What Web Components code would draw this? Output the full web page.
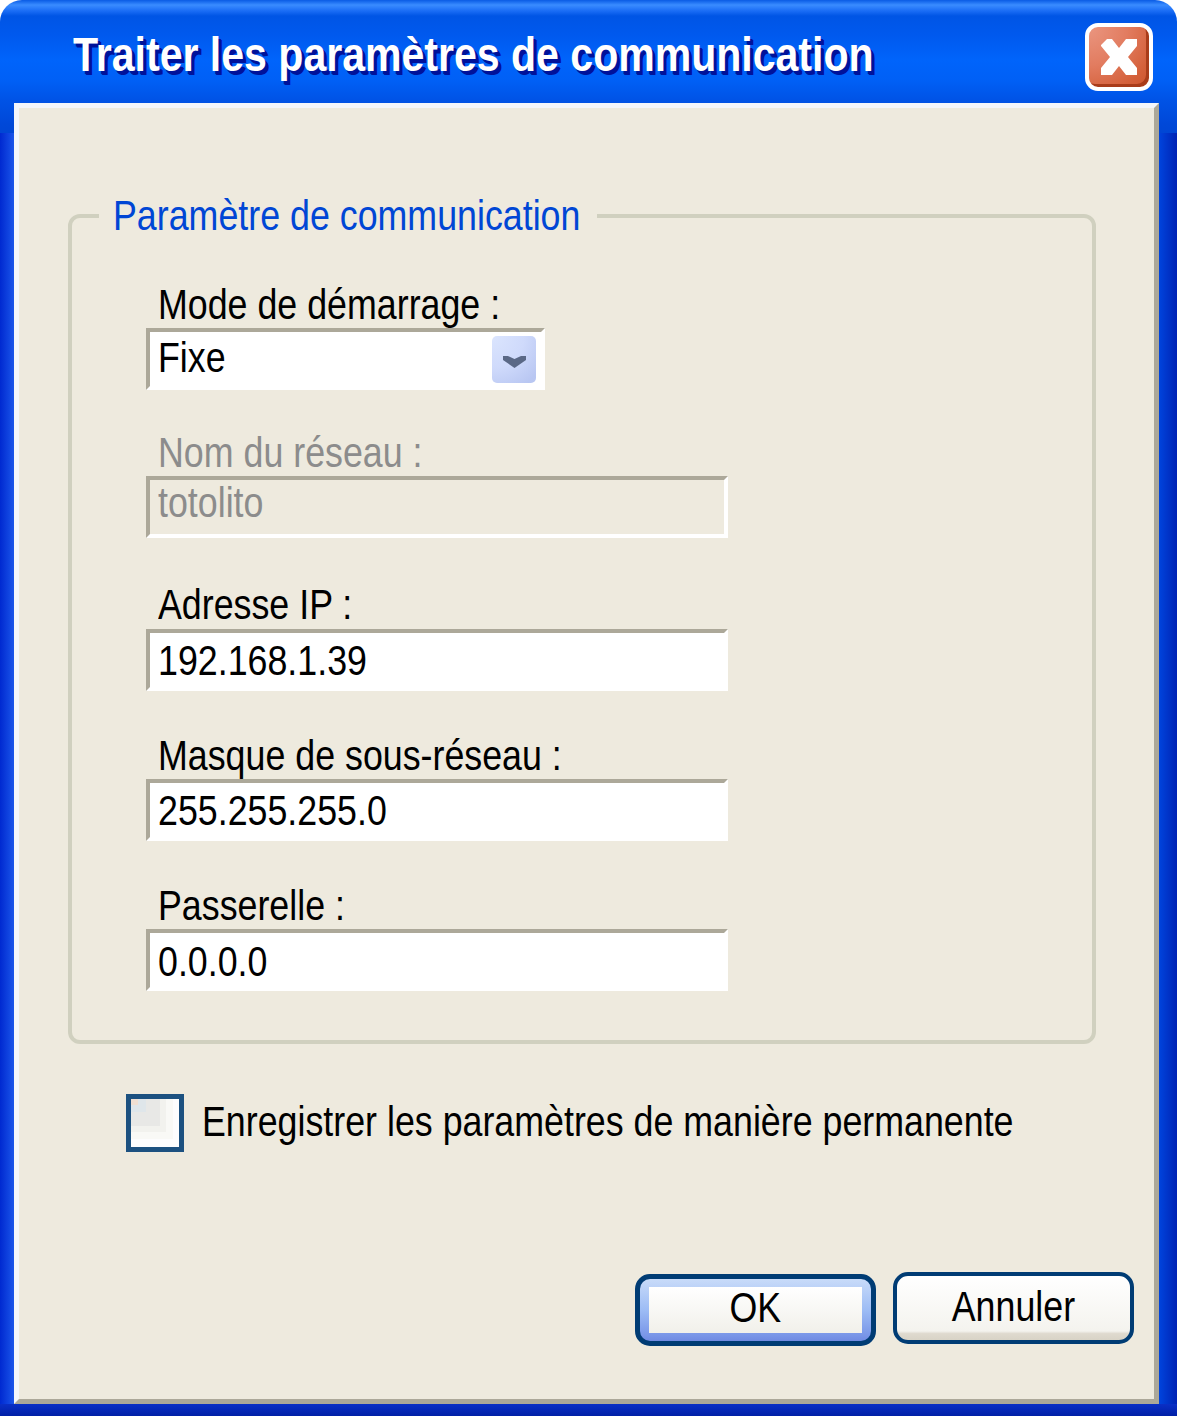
<!DOCTYPE html>
<html lang="fr">
<head>
<meta charset="utf-8">
<title>Traiter les paramètres de communication</title>
<style>
  html, body { margin: 0; padding: 0; background: #fff; }
  body { font: 42px/46px "Liberation Sans", Arial, sans-serif; color: #000; --sx: .852; }
</style>
</head>
<body>
<xp-window>
  <span slot="title">Traiter les paramètres de communication</span>
  <xp-group>
    <span slot="legend">Paramètre de communication</span>
    <xp-combo>Mode de démarrage :<span slot="value">Fixe</span></xp-combo>
    <xp-field disabled style="margin-top:40px;--value-lh:46px">Nom du réseau :<span slot="value">totolito</span></xp-field>
    <xp-field style="margin-top:45px;--label-lh:44px;--value-lh:56px">Adresse IP :<span slot="value">192.168.1.39</span></xp-field>
    <xp-field style="margin-top:42px;--value-lh:56px">Masque de sous-réseau :<span slot="value">255.255.255.0</span></xp-field>
    <xp-field style="margin-top:42px;--value-lh:58px">Passerelle :<span slot="value">0.0.0.0</span></xp-field>
  </xp-group>
  <xp-check>Enregistrer les paramètres de manière permanente</xp-check>
  <xp-actions>
    <xp-button default>OK</xp-button>
    <xp-button>Annuler</xp-button>
  </xp-actions>
</xp-window>

<script>
const textCss = `
  .t { display: inline-block; white-space: nowrap; transform: scaleX(var(--sx)); transform-origin: left center; }
`;

class XpWindow extends HTMLElement {
  constructor() {
    super();
    this.attachShadow({ mode: 'open' });
    this.shadowRoot.innerHTML = `
      <style>
        ${textCss}
        :host {
          display: flex;
          flex-direction: column;
          box-sizing: border-box;
          width: 1177px;
          height: 1416px;
          padding: 0 18px 12px 14px;
          border-radius: 22px 22px 0 0;
          background:
            linear-gradient(#0a2fc6, #0020a6) left bottom / 100% 12px no-repeat,
            linear-gradient(#0a5be4 0, #1c6ff0 2px, #3a8cff 5px, #1a6cf5 11px, #0055e5 16px, #0059ee 35px, #0064fb 60px, #0060f6 80px, #0053e6 100px, #0048d8 124px, #0046d4 133px) left top / 100% 133px no-repeat,
            linear-gradient(90deg, #0029d0, #1a55ea 14px, #0044dd 1159px, #0023b4);
        }
        .bar {
          flex: none;
          display: flex;
          align-items: center;
          justify-content: space-between;
          box-sizing: border-box;
          height: 103px;
          padding: 0 6px 0 59px;
        }
        .title {
          padding-top: 6px;
          font-weight: bold;
          font-size: 48px;
          line-height: 56px;
          color: #fff;
          text-shadow: 3px 3px 0 #00129a, 4px 4px 0 #00129a;
          --sx: .855;
        }
        .close {
          box-sizing: border-box;
          width: 68px;
          height: 68px;
          margin-top: 11px;
          display: flex;
          align-items: center;
          justify-content: center;
          border: 4px solid #fff;
          border-radius: 13px;
          background:
            radial-gradient(circle at 0 0, #ea9680 0, #e27c60 45%, #d4603a 80%, #c64c24 115%);
          box-shadow: inset -3px -3px 0 #a93c1a;
        }
        .close svg { width: 36px; height: 36px; fill: #fff; }
        .panel {
          flex: 1;
          display: flex;
          flex-direction: column;
          box-sizing: border-box;
          border: 5px solid;
          border-color: #f4f6fb #aca899 #aca899 #f4f6fb;
          background: #eeeade;
        }
      </style>
      <div class="bar">
        <div class="title"><span class="t"><slot name="title"></slot></span></div>
        <div class="close">
          <svg viewBox="0 0 36 36"><path d="M0 6 6 0H11L18 9 25 0H36V7L27 18 36 29V36H25L18 27 11 36H0V29L9 18 0 7Z"/></svg>
        </div>
      </div>
      <div class="panel"><slot></slot></div>
    `;
  }
}

class XpGroup extends HTMLElement {
  constructor() {
    super();
    this.attachShadow({ mode: 'open' });
    this.shadowRoot.innerHTML = `
      <style>
        ${textCss}
        :host { display: block; margin: 85px 58px 0 49px; }
        fieldset {
          display: flex;
          flex-direction: column;
          margin: 0;
          min-width: 0;
          padding: 43px 0 49px 74px;
          border: 4px solid #d0d0bf;
          border-radius: 12px;
        }
        legend {
          box-sizing: border-box;
          width: 498px;
          margin-left: -47px;
          padding: 0 14px;
          color: #0046d5;
        }
        .stack { display: flex; flex-direction: column; align-items: flex-start; }
      </style>
      <fieldset>
        <legend><span class="t"><slot name="legend"></slot></span></legend>
        <div class="stack"><slot></slot></div>
      </fieldset>
    `;
  }
}

class XpField extends HTMLElement {
  constructor() {
    super();
    this.attachShadow({ mode: 'open' });
    this.shadowRoot.innerHTML = `
      <style>
        ${textCss}
        :host { display: block; width: 582px; }
        :host([disabled]) { color: #8c8c8c; }
        .label { padding-left: 12px; height: 46px; line-height: var(--label-lh, 46px); }
        .box {
          box-sizing: border-box;
          height: 62px;
          padding-left: 8px;
          border: 4px solid;
          border-color: #aca899 #fff #fff #aca899;
          background: #fff;
          line-height: var(--value-lh, 54px);
        }
        :host([disabled]) .box { background: #eeeade; }
      </style>
      <div class="label"><span class="t"><slot></slot></span></div>
      <div class="box"><span class="t"><slot name="value"></slot></span></div>
    `;
  }
}

class XpCombo extends HTMLElement {
  constructor() {
    super();
    this.attachShadow({ mode: 'open' });
    this.shadowRoot.innerHTML = `
      <style>
        ${textCss}
        :host { display: block; width: 399px; }
        .label { padding-left: 12px; height: 46px; }
        .box {
          display: flex;
          align-items: center;
          justify-content: space-between;
          box-sizing: border-box;
          height: 62px;
          padding: 0 5px 0 8px;
          border: 4px solid;
          border-color: #aca899 #fff #fff #aca899;
          background: #fff;
          line-height: 52px;
        }
        .value { padding-bottom: 2px; }
        .arrow {
          width: 44px;
          height: 47px;
          display: flex;
          align-items: center;
          justify-content: center;
          border-radius: 5px;
          background: radial-gradient(circle at 0 0, #dbe5fe 0, #cfdafb 50%, #b9c7f2 90%, #b3c1ef 130%);
        }
        .arrow svg { width: 23px; height: 13px; fill: #5a6886; margin-top: 5px; }
      </style>
      <div class="label"><span class="t"><slot></slot></span></div>
      <div class="box">
        <span class="t value"><slot name="value"></slot></span>
        <div class="arrow"><svg viewBox="0 0 23 13"><path d="M0 1H5L11.5 4 18 1H23V5L11.5 13 0 5Z"/></svg></div>
      </div>
    `;
  }
}

class XpCheck extends HTMLElement {
  constructor() {
    super();
    this.attachShadow({ mode: 'open' });
    this.shadowRoot.innerHTML = `
      <style>
        ${textCss}
        :host {
          display: flex;
          align-items: center;
          gap: 18px;
          margin: 50px 0 0 107px;
        }
        .t { padding-bottom: 2px; }
        .box {
          flex: none;
          box-sizing: border-box;
          width: 58px;
          height: 58px;
          border: 5px solid #1c5180;
          /* XP checkbox: stepped fade from the top left corner */
          background:
            linear-gradient(#f0dfd2, #f0dfd2) 0 0 / 7px 6px no-repeat,
            linear-gradient(#dfe6ea, #dfe6ea) 0 0 / 15px 13px no-repeat,
            linear-gradient(#e8e8e6, #e8e8e6) 0 0 / 29px 27px no-repeat,
            linear-gradient(#f2f2ee, #f2f2ee) 0 0 / 35px 33px no-repeat,
            linear-gradient(#f9f9f6, #f9f9f6) 0 0 / 42px 40px no-repeat,
            #fdfdfe;
        }
      </style>
      <div class="box"></div>
      <span class="t"><slot></slot></span>
    `;
  }
}

class XpActions extends HTMLElement {
  constructor() {
    super();
    this.attachShadow({ mode: 'open' });
    this.shadowRoot.innerHTML = `
      <style>
        :host {
          display: flex;
          justify-content: flex-end;
          align-items: flex-start;
          gap: 17px;
          margin-top: 120px;
          padding-right: 20px;
        }
      </style>
      <slot></slot>
    `;
  }
}

class XpButton extends HTMLElement {
  constructor() {
    super();
    this.attachShadow({ mode: 'open' });
    this.shadowRoot.innerHTML = `
      <style>
        ${textCss}
        :host {
          display: block;
          box-sizing: border-box;
          width: 241px;
          height: 72px;
          border: 4px solid #003c74;
          border-radius: 15px;
          background: linear-gradient(#fff, #f4f3ee 86%, #dfdacf 90%, #d8d3c6);
          overflow: hidden;
        }
        :host([default]) {
          margin-top: 2px;
          border-width: 5px;
          background: linear-gradient(#c8dbf9, #9dbcf5 50%, #7a97e8 90%, #6f8ae2);
        }
        .face {
          box-sizing: border-box;
          height: 100%;
          padding-bottom: 2px;
          display: flex;
          align-items: center;
          justify-content: center;
        }
        :host([default]) .face {
          height: 46px;
          padding-bottom: 4px;
          margin: 8px 9px;
          background: linear-gradient(#fff, #f1f0ea);
        }
        .t { transform-origin: center; }
      </style>
      <div class="face"><span class="t"><slot></slot></span></div>
    `;
  }
}

customElements.define('xp-window', XpWindow);
customElements.define('xp-group', XpGroup);
customElements.define('xp-field', XpField);
customElements.define('xp-combo', XpCombo);
customElements.define('xp-check', XpCheck);
customElements.define('xp-actions', XpActions);
customElements.define('xp-button', XpButton);
</script>
</body>
</html>
